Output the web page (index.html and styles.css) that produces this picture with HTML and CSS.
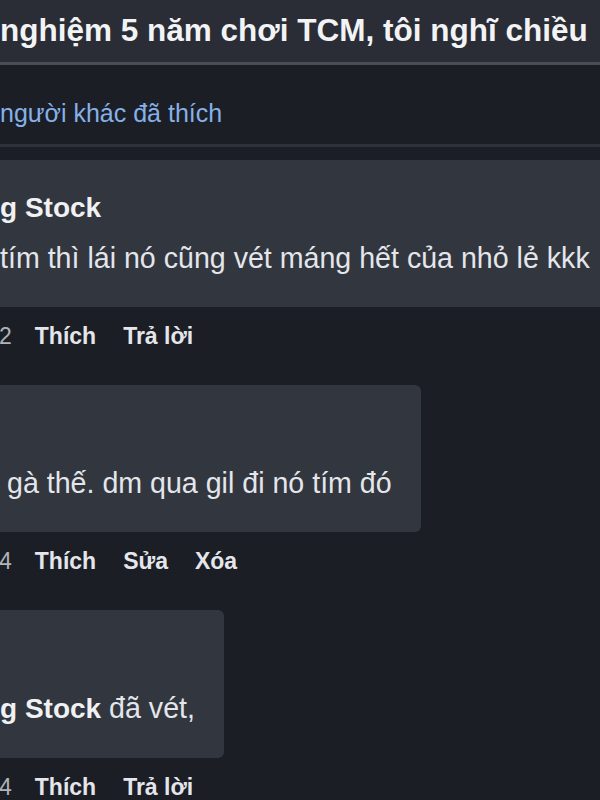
FILE: index.html
```html
<!DOCTYPE html>
<html>
<head>
    <title>Bình luận</title>
    <link rel="stylesheet" href="styles.css">
</head>
<body>
    <div class="post-head">
        <h1 class="post-title">nghiệm 5 năm chơi TCM, tôi nghĩ chiều</h1>
    </div>

    <div class="likes">người khác đã thích</div>
    <div class="divider"></div>

    <div class="comments">
        <div class="comment">
            <div class="bubble">
                <div class="author">g Stock</div>
                <div class="text">tím thì lái nó cũng vét máng hết của nhỏ lẻ kkk</div>
            </div>
            <div class="actions">
                <span class="time">2</span>
                <a class="action">Thích</a>
                <a class="action">Trả lời</a>
            </div>
        </div>

        <div class="comment">
            <div class="bubble">
                <div class="author">&nbsp;</div>
                <div class="text shift-in">gà thế. dm qua gil đi nó tím đó</div>
            </div>
            <div class="actions">
                <span class="time">4</span>
                <a class="action">Thích</a>
                <a class="action">Sửa</a>
                <a class="action">Xóa</a>
            </div>
        </div>

        <div class="comment">
            <div class="bubble">
                <div class="author">&nbsp;</div>
                <div class="text"><b class="mention">g Stock</b> đã vét,</div>
            </div>
            <div class="actions">
                <span class="time">4</span>
                <a class="action">Thích</a>
                <a class="action">Trả lời</a>
            </div>
        </div>
    </div>
</body>
</html>
```

FILE: styles.css
```css
body {
    margin: 0;
    overflow: hidden;
    background-color: #1b1e25;
    color: #e4e6eb;
    font-family: "Liberation Sans", Arial, sans-serif;
}

.post-head {
    height: 62px;
    background-color: #2a2d35;
    border-bottom: 3px solid #4a4d55;
    overflow: hidden;
}

.post-title {
    margin: 0;
    font-size: 31.5px;
    line-height: 60px;
    font-weight: bold;
    color: #f2f3f5;
    white-space: nowrap;
}

.likes {
    margin-top: 28px;
    font-size: 25px;
    line-height: 40px;
    color: #86b1e8;
    white-space: nowrap;
}

.divider {
    height: 3px;
    margin: 11px 0 13px;
    background-color: #2d3139;
}

.comments {
    margin-left: -24px;
}

.comment {
    margin-bottom: 29px;
}

.bubble {
    display: inline-block;
    padding: 28px 29px 22px 24px;
    background-color: #32363e;
    border-radius: 6px;
    white-space: nowrap;
}

.author {
    font-size: 28px;
    line-height: 40px;
    font-weight: bold;
    color: #f0f1f3;
}

.text {
    margin-top: 3px;
    font-size: 28.6px;
    line-height: 54px;
}

.mention {
    font-size: 28px;
    color: #f0f1f3;
}

.shift-in {
    text-indent: 7px;
}

.actions {
    display: flex;
    margin-top: 9px;
    padding-left: 23px;
    font-size: 23px;
    line-height: 40px;
    font-weight: bold;
}

.time {
    margin-right: 23px;
    color: #b0b3b8;
    font-weight: normal;
}

.action {
    margin-right: 27px;
    color: #e4e6eb;
    cursor: pointer;
}
```
